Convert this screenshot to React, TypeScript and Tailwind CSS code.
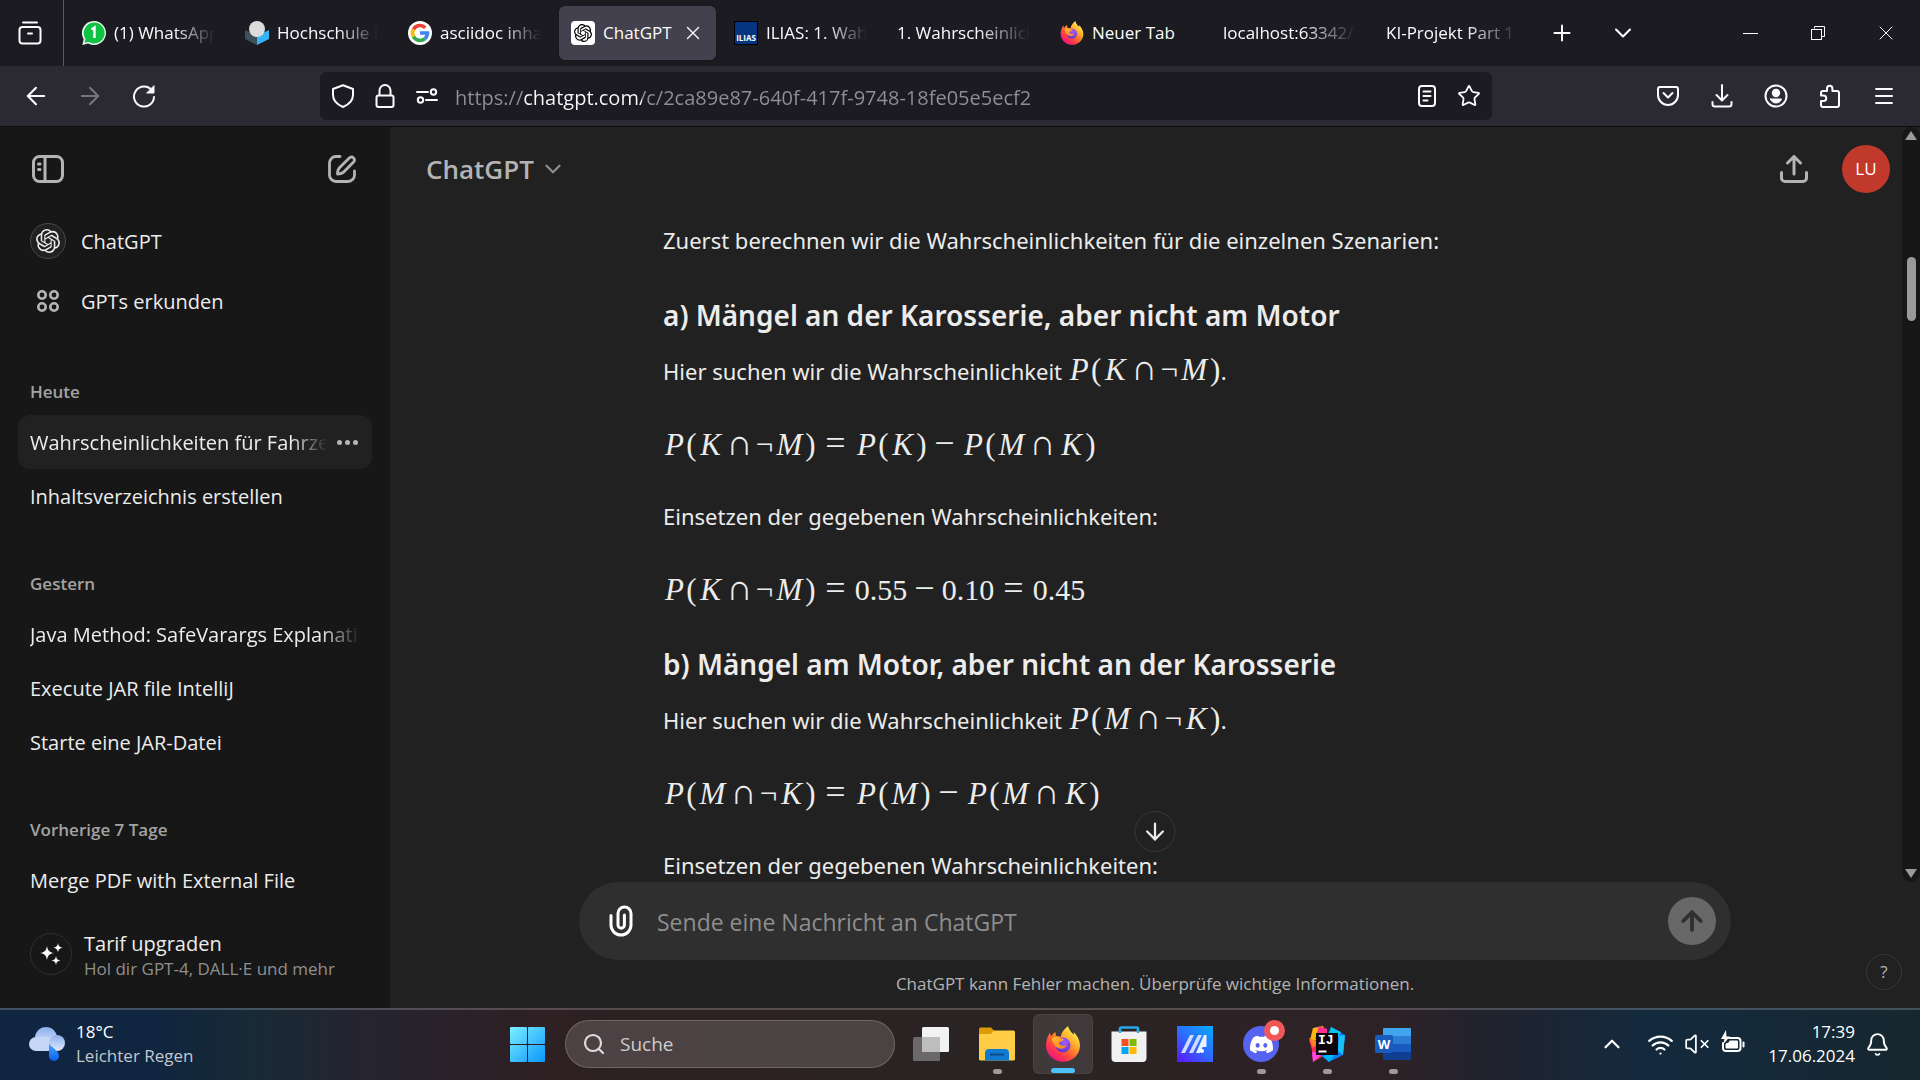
import React from "react";
import { SiOpenai, SiDiscord } from "react-icons/si";
import {
  ArrowLeft,
  ArrowRight,
  ArrowDown,
  ArrowUp,
  ChevronDown,
  ChevronUp,
  Plus,
  X,
  Menu,
  Star,
  Search,
  Wifi,
  VolumeX,
  Bell,
} from "lucide-react";

/* ---------- Browser icons ---------- */

const line = {
  fill: "none",
  stroke: "currentColor",
  strokeWidth: 2,
  strokeLinecap: "round" as const,
  strokeLinejoin: "round" as const,
};

function FirefoxLogo({ className, id }: { className: string; id: string }) {
  return (
    <svg viewBox="0 0 34 36" className={className} aria-hidden="true">
      <defs>
        <linearGradient id={id + "a"} x1="0.85" y1="0.1" x2="0.2" y2="0.95">
          <stop offset="0" stopColor="#fff44f" />
          <stop offset="0.3" stopColor="#ffb02e" />
          <stop offset="0.55" stopColor="#ff6a2b" />
          <stop offset="0.8" stopColor="#ff2f55" />
          <stop offset="1" stopColor="#e3158a" />
        </linearGradient>
        <radialGradient id={id + "b"} cx="0.6" cy="0.3" r="0.8">
          <stop offset="0" stopColor="#a05cff" />
          <stop offset="0.6" stopColor="#7542e5" />
          <stop offset="1" stopColor="#5a2db8" />
        </radialGradient>
        <linearGradient id={id + "c"} x1="0" y1="0" x2="1" y2="1">
          <stop offset="0" stopColor="#ffbd2e" />
          <stop offset="1" stopColor="#ff7a1f" />
        </linearGradient>
      </defs>
      <path
        d="M22 0c1 4 3 6 5.500 8.500.5-.8.4-1.800.2-2.500 3.600 3.600 6.300 8.500 6.300 13.500 0 9.300-7.600 16.300-17 16.300S0 28.500 0 19.500c0-4.500 1.300-8.500 4-13 .1 1.500.5 2.800 1.300 3.700C6.300 8.600 8 6.600 9.500 6c-.1 1.300.3 3 1 4 1.500.2 3 .2 4.500.8C14.800 7 18.500 3 22 0Z"
        fill={"url(#" + id + "a)"}
      />
      <circle cx="17" cy="19" r="7.500" fill={"url(#" + id + "b)"} />
      <path
        d="M5.500 12.500c2.500-2 5-2 7.500-.7 1.800.7 3.500.6 5 1.700-1 1.800-3.500 2-5 3-.4 1.200.8 2.300 2.300 2.800 2.200.7 3.700-.6 5.200.2-1 2.200-3.500 3.700-6.300 3.200-4.200-.7-6.700-4.200-8.700-10.200Z"
        fill={"url(#" + id + "c)"}
      />
    </svg>
  );
}

const WhatsAppIcon = () => (
  <svg viewBox="0 0 24 24" className="size-6 shrink-0" aria-hidden="true">
    <path d="M12 0a12 12 0 1 1-6 22.400L.3 24l1.400-5.800A12 12 0 0 1 12 0Z" fill="#e9f7ee" />
    <path d="M12 1.500a10.500 10.500 0 1 1-5.600 19.300L2.500 22l1-4.200A10.500 10.500 0 0 1 12 1.500Z" fill="#10c243" />
    <path d="M9.500 8.500 12.500 6.500V17" stroke="#fff" strokeWidth="2.400" fill="none" />
  </svg>
);

const HochschuleIcon = () => (
  <svg viewBox="0 0 24 24" className="size-6 shrink-0" aria-hidden="true">
    <path d="M0 9l12 6v9L0 18Z" fill="#3d5059" />
    <path d="M24 9l-12 6v9l12-6Z" fill="#35b4fb" />
    <ellipse cx="12" cy="8" rx="8" ry="8" fill="#dcdcdc" />
  </svg>
);

const GoogleIcon = () => (
  <svg viewBox="0 0 24 24" className="size-6 shrink-0" aria-hidden="true">
    <circle cx="12" cy="12" r="12" fill="#fff" />
    <g fill="none" strokeWidth="3.600">
      <path d="M5.500 8.300A7.500 7.500 0 0 1 17.300 6.700" stroke="#ea4335" />
      <path d="M5.500 15.700a7.500 7.500 0 0 1 0-7.400" stroke="#fbbc05" />
      <path d="M17 17.600A7.500 7.500 0 0 1 5.500 15.700" stroke="#34a853" />
      <path d="M12 12h7.500a7.500 7.500 0 0 1-2.500 5.600" stroke="#4285f4" />
    </g>
  </svg>
);

const ChatGptTabIcon = () => (
  <span className="flex size-6 shrink-0 items-center justify-center rounded bg-white">
    <SiOpenai className="size-[18px] text-black" />
  </span>
);

const IliasIcon = () => (
  <span className="flex size-6 shrink-0 items-end justify-center border border-black bg-[#06357f] pb-px text-[8px] leading-[10px] font-bold text-white">
    ILIAS
  </span>
);

const SidebarToggleIcon = () => (
  <svg viewBox="0 0 32 28" className="h-7 w-8" {...line} strokeWidth={3}>
    <rect x="1.500" y="1.500" width="29" height="25" rx="6" />
    <path d="M13 2v24M6.500 9h1.500M6.500 14.500h1.500" />
  </svg>
);

const NewChatIcon = () => (
  <svg viewBox="0 0 28 28" className="size-7" {...line} strokeWidth={2.8}>
    <path d="M12 1.500H8A6.500 6.500 0 0 0 1.500 8v12A6.500 6.500 0 0 0 8 26.500h12a6.500 6.500 0 0 0 6.500-6.500v-4" />
    <path d="M21.800 2.600a2.900 2.900 0 0 1 4 4.100L16 16.800c-1.400 1.400-3.500 2.200-6.500 2.200 0-3 .8-5.100 2.200-6.500Z" />
  </svg>
);

const ShieldIcon = () => (
  <svg viewBox="0 0 24 24" className="size-6" {...line}>
    <path d="M12 1.200 22 5v6c0 5.500-4.500 9.700-10 12C6.500 20.700 2 16.500 2 11V5Z" />
  </svg>
);

const LockIcon = () => (
  <svg viewBox="0 0 24 24" className="size-6" {...line}>
    <rect x="3.500" y="11.500" width="17" height="11.500" rx="2" />
    <path d="M6.500 11V6.500a5.500 5.500 0 0 1 11 0V11" />
  </svg>
);

const PermissionsIcon = () => (
  <svg viewBox="0 0 24 24" className="size-6" {...line}>
    <path d="M2 8h11M11 16h11" />
    <circle cx="18.500" cy="8" r="2.700" />
    <circle cx="5.500" cy="16" r="2.700" />
  </svg>
);

const ReloadIcon = () => (
  <svg viewBox="0 0 24 24" className="size-6" {...line}>
    <path d="M20 6.500A10 10 0 1 0 22 13" />
    <path d="M22 2v7h-7Z" fill="currentColor" strokeWidth="1" />
  </svg>
);

const ReaderIcon = () => (
  <svg viewBox="0 0 24 24" className="size-6" {...line}>
    <rect x="4" y="2" width="16" height="20" rx="3" />
    <path d="M8.500 7.500h7M8.500 12h7M8.500 16.500h4" />
  </svg>
);

const PocketIcon = () => (
  <svg viewBox="0 0 24 24" className="size-6" {...line}>
    <path d="M4 3h16a2 2 0 0 1 2 2v6a10 10 0 0 1-20 0V5a2 2 0 0 1 2-2Z" />
    <path d="m7.500 9 4.500 4.500L16.500 9" />
  </svg>
);

const DownloadIcon = () => (
  <svg viewBox="0 0 24 24" className="size-6" {...line}>
    <path d="M12 1v15M6.500 11l5.500 5.500 5.500-5.500M2.500 18v2a2.500 2.500 0 0 0 2.500 2.500h14a2.500 2.500 0 0 0 2.500-2.500v-2" />
  </svg>
);

const AccountIcon = () => (
  <svg viewBox="0 0 24 24" className="size-6" {...line}>
    <circle cx="12" cy="12" r="10.500" />
    <circle cx="12" cy="9" r="3.200" fill="currentColor" />
    <path d="M6.500 15h11c-.5 2.500-3 4-5.500 4s-5-1.500-5.500-4Z" fill="currentColor" strokeWidth="1" />
  </svg>
);

const ExtensionIcon = () => (
  <svg viewBox="0 0 24 24" className="size-6" {...line}>
    <path d="M9 7V4.500a2.700 2.700 0 0 1 5.400 0V7H19a2 2 0 0 1 2 2v12a2 2 0 0 1-2 2H5a2 2 0 0 1-2-2v-4h2.500a2.500 2.500 0 0 0 0-5.500H3V9a2 2 0 0 1 2-2Z" />
  </svg>
);

const ShareIcon = () => (
  <svg viewBox="0 0 28 28" className="size-7" {...line} strokeWidth={3}>
    <path d="M14 19V2M7.500 8 14 1.500 20.500 8M1.500 17.500V23a3.500 3.500 0 0 0 3.500 3.500h18a3.500 3.500 0 0 0 3.500-3.500v-5.500" />
  </svg>
);

const SparkleIcon = () => (
  <svg viewBox="0 0 24 24" className="size-6" fill="currentColor">
    <path d="M8 4c.8 4.500 2.200 6.200 7 7-4.800.8-6.200 2.500-7 7-.8-4.500-2.200-6.200-7-7 4.800-.8 6.200-2.500 7-7ZM19 1c.5 3 1.500 4.300 4.800 4.800C20.500 6.300 19.500 7.500 19 10.500c-.5-3-1.500-4.200-4.800-4.700C17.500 5.300 18.500 4 19 1ZM17 14c.5 3 1.500 4 4.500 4.500C18.500 19 17.500 20 17 23c-.5-3-1.500-4-4.500-4.500C15.500 18 16.500 17 17 14Z" />
  </svg>
);

/* ---------- Taskbar icons ---------- */

const WeatherIcon = () => (
  <svg viewBox="0 0 36 34" className="h-[34px] w-9 shrink-0" aria-hidden="true">
    <defs>
      <linearGradient id="cloud" x1="0" y1="0" x2="0" y2="1">
        <stop offset="0" stopColor="#8fb1ee" />
        <stop offset="1" stopColor="#dfe9fb" />
      </linearGradient>
      <linearGradient id="drop" x1="0" y1="0" x2="0" y2="1">
        <stop offset="0" stopColor="#4aa3ff" />
        <stop offset="1" stopColor="#0b62f0" />
      </linearGradient>
    </defs>
    <circle cx="17" cy="11" r="11" fill="url(#cloud)" />
    <rect x="0" y="10" width="26" height="14" rx="7" fill="#c5d6f6" />
    <circle cx="28" cy="16" r="8" fill="url(#cloud)" />
    <path d="M20 16c1 4 10 7 10 13a5 5 0 0 1-10 0Z" fill="url(#drop)" />
  </svg>
);

const WindowsIcon = () => (
  <svg viewBox="0 0 35 35" className="size-[35px]" aria-hidden="true">
    <defs>
      <linearGradient id="win" gradientUnits="userSpaceOnUse" x1="0" y1="0" x2="35" y2="35">
        <stop offset="0" stopColor="#7cf0ff" />
        <stop offset="1" stopColor="#0a95fb" />
      </linearGradient>
    </defs>
    <g fill="url(#win)">
      <rect width="17" height="17" rx="1" />
      <rect x="18" width="17" height="17" rx="1" />
      <rect y="18" width="17" height="17" rx="1" />
      <rect x="18" y="18" width="17" height="17" rx="1" />
    </g>
  </svg>
);

const TaskViewIcon = () => (
  <svg viewBox="0 0 36 36" className="size-9" aria-hidden="true">
    <rect y="11" width="27" height="24" rx="1.500" fill="#6a6868" />
    <rect x="9" y="1" width="27" height="25" rx="1.500" fill="#f2f2f2" />
    <rect x="9" y="11" width="18" height="15" fill="#bdbdbd" />
  </svg>
);

const ExplorerIcon = () => (
  <svg viewBox="0 0 36 36" className="size-9" aria-hidden="true">
    <path d="M0 3a1.500 1.500 0 0 1 1.500-1.500H12l4 4-3 5H0Z" fill="#dd9c06" />
    <path d="M0 8h12l3-3.500h19.500A1.500 1.500 0 0 1 36 6v27a1.500 1.500 0 0 1-1.500 1.500h-33A1.500 1.500 0 0 1 0 33Z" fill="#ffcd45" />
    <path d="M6 34.500V27a4 4 0 0 1 4-4h16a4 4 0 0 1 4 4v7.500Z" fill="#0f7bd0" />
    <path d="M11 28.500h14" stroke="#084b87" strokeWidth="2" />
  </svg>
);

const StoreIcon = () => (
  <svg viewBox="0 0 36 36" className="size-9" aria-hidden="true">
    <path d="M9 7V2.500a1 1 0 0 1 1-1h16a1 1 0 0 1 1 1V7" fill="none" stroke="#27abe8" strokeWidth="2.400" />
    <path d="M.5 5.500h35V32a4 4 0 0 1-4 4h-27a4 4 0 0 1-4-4Z" fill="#f1f1f1" />
    <path d="M9 2.500V7M27 2.500V7" stroke="#27abe8" strokeWidth="2.400" />
    <rect x="10.500" y="13" width="7" height="7" fill="#f25022" />
    <rect x="18.500" y="13" width="7" height="7" fill="#7fba00" />
    <rect x="10.500" y="21" width="7" height="7" fill="#00a4ef" />
    <rect x="18.500" y="21" width="7" height="7" fill="#ffb900" />
  </svg>
);

const AsusIcon = () => (
  <svg viewBox="0 0 36 36" className="size-9" aria-hidden="true">
    <defs>
      <linearGradient id="asus" x1="0.1" y1="1" x2="0.9" y2="0">
        <stop offset="0" stopColor="#5a1cf5" />
        <stop offset="0.5" stopColor="#2d6cff" />
        <stop offset="1" stopColor="#0aa6ff" />
      </linearGradient>
    </defs>
    <rect width="36" height="36" fill="url(#asus)" />
    <path d="M4 27 13 9h4L8 27ZM12 27 21 9h4l-9 18Z" fill="#cfdcff" />
    <path d="M19 27 27 9h2.500v12h-4L23 27Z" fill="#eaf1ff" />
    <circle cx="25" cy="25" r="2" fill="#fff" />
  </svg>
);

const DiscordIcon = () => (
  <span className="relative block size-9">
    <span className="flex size-9 items-center justify-center rounded-full bg-[#5662f0]">
      <SiDiscord className="size-[23px] text-white" />
    </span>
    <span className="absolute -top-1.5 -right-1.5 size-[21px] rounded-full border-[6px] border-[#f05858] bg-white" />
  </span>
);

const IntelliJIcon = () => (
  <span className="relative block size-9">
    <svg viewBox="0 0 36 36" className="size-9" aria-hidden="true">
      <path d="M4 2 14 0l4 10-10 6-7-2Z" fill="#fdb60d" />
      <path d="M10 0 18 3v10H6Z" fill="#ff318c" />
      <path d="M0 14h12l6 14-14 8-1-12Z" fill="#fe2857" />
      <path d="M0 12 10 16 4 22Z" fill="#fc801d" />
      <path d="M22 1 36 9l-2 20-14 7-10-8Z" fill="#087cfa" />
      <path d="M22 1 32 6l-4 8-8-6Z" fill="#07c3f2" />
      <path d="M14 30 28 26 20 36Z" fill="#00b8f1" />
      <path d="M30 10 36 9 34 29l-5-4Z" fill="#17c0f5" />
      <path d="M3 26 14 27 4 36Z" fill="#ff45ed" />
      <rect x="7" y="7" width="22" height="22" fill="#0c0409" />
      <rect x="9.500" y="24.500" width="8" height="2" fill="#fff" />
    </svg>
    <span className="absolute top-[8px] left-[9px] font-mono text-[13px] leading-[13px] font-bold text-white">IJ</span>
  </span>
);

const WordIcon = () => (
  <span className="relative block size-9">
    <svg viewBox="0 0 36 36" className="size-9" aria-hidden="true">
      <path d="M9 2h26a1 1 0 0 1 1 1v7H8V3a1 1 0 0 1 1-1Z" fill="#41a5ee" />
      <path d="M8 10h28v8H8Z" fill="#2b7cd3" />
      <path d="M8 18h28v8H8Z" fill="#185abd" />
      <path d="M8 26h28v7a1 1 0 0 1-1 1H9a1 1 0 0 1-1-1Z" fill="#103f91" />
      <rect y="9" width="18" height="18" rx="1.500" fill="#185abd" />
    </svg>
    <span className="absolute top-[9px] left-0 w-[18px] text-center text-[13px] leading-[18px] font-bold text-white">W</span>
  </span>
);

const BatteryIcon = () => (
  <svg viewBox="0 0 26 28" className="h-7 w-[26px]" {...line}>
    <path d="M9 8h8.500a3 3 0 0 1 3 3v7a3 3 0 0 1-3 3H6a3 3 0 0 1-3-3v-5" />
    <path d="M10 11h7.500v7H6v-4l3.500-1.500Z" fill="currentColor" strokeWidth="1" />
    <path d="M23.500 12.500v4" />
    <path d="M6 0 1 9h3.500L3.500 14 10 6.500H6.500Z" fill="currentColor" stroke="none" />
  </svg>
);

/* ---------- Browser chrome ---------- */

type Tab = { title: string; icon?: React.ReactNode; active?: boolean; fade?: boolean };

const tabs: Tab[] = [
  { title: "(1) WhatsApp", icon: <WhatsAppIcon />, fade: true },
  { title: "Hochschule H", icon: <HochschuleIcon />, fade: true },
  { title: "asciidoc inhalt", icon: <GoogleIcon />, fade: true },
  { title: "ChatGPT", icon: <ChatGptTabIcon />, active: true },
  { title: "ILIAS: 1. Wahr", icon: <IliasIcon />, fade: true },
  { title: "1. Wahrscheinlich", fade: true },
  { title: "Neuer Tab", icon: <FirefoxLogo id="ft" className="h-6 w-6 shrink-0" /> },
  { title: "localhost:63342/", fade: true },
  { title: "KI-Projekt Part 1", fade: true },
];

function TabBar() {
  return (
    <header className="flex h-[66px] shrink-0 items-center bg-[#1c1b22] text-[17px] text-[#fbfbfe]">
      <button aria-label="Firefox View" className="flex h-full w-16 shrink-0 items-center border-r border-[#5b5a64] pl-[18px]">
        <svg viewBox="0 0 24 24" className="size-6" {...line}>
          <path d="M5 1.500h14" />
          <rect x="1.500" y="6" width="21" height="16.500" rx="3" />
          <path d="M10 12.500h4" />
        </svg>
      </button>
      <div role="tablist" className="ml-1.5 flex min-w-0 gap-1.5">
        {tabs.map((t) => (
          <div
            key={t.title}
            className={
              t.active
                ? "flex h-[54px] w-[157px] min-w-0 items-center rounded-md bg-[#42414d] px-3 shadow"
                : "flex h-[54px] w-[157px] min-w-0 items-center px-3"
            }
          >
            <button role="tab" aria-selected={!!t.active} className="flex min-w-0 flex-1 items-center gap-2 text-left">
              {t.icon}
              <span
                className={
                  t.fade
                    ? "min-w-0 flex-1 overflow-hidden whitespace-nowrap [mask-image:linear-gradient(to_right,black_60%,transparent)]"
                    : "min-w-0 flex-1 whitespace-nowrap"
                }
              >
                {t.title}
              </span>
            </button>
            {t.active && (
              <button aria-label="Tab schließen" className="shrink-0">
                <X className="size-[22px]" strokeWidth={1.5} />
              </button>
            )}
          </div>
        ))}
      </div>
      <button aria-label="Neuer Tab" className="ml-[18px] shrink-0">
        <Plus className="size-[26px]" strokeWidth={1.8} />
      </button>
      <button aria-label="Alle Tabs auflisten" className="ml-[34px] shrink-0">
        <ChevronDown className="size-[28px]" strokeWidth={1.8} />
      </button>
      <div className="ml-auto flex shrink-0 items-center gap-[44px] pr-[22px]">
        <button aria-label="Minimieren" className="flex size-6 items-center justify-center">
          <span className="h-px w-[15px] bg-current" />
        </button>
        <button aria-label="Verkleinern" className="flex size-6 items-center justify-center">
          <svg viewBox="0 0 16 16" className="size-4" fill="none" stroke="currentColor">
            <path d="M4.500 3.500v-2h10v10h-3" />
            <rect x="1.500" y="4.500" width="10" height="10" />
          </svg>
        </button>
        <button aria-label="Schließen" className="flex size-6 items-center justify-center">
          <X className="size-7" strokeWidth={1} />
        </button>
      </div>
    </header>
  );
}

function NavBar() {
  return (
    <nav className="flex h-[61px] shrink-0 items-center border-b border-[#0c0c0d] bg-[#2b2a33] text-[#fbfbfe]">
      <div className="flex w-80 shrink-0 items-center gap-[30px] pl-6">
        <button aria-label="Zurück">
          <ArrowLeft className="size-7 -mx-0.5" strokeWidth={1.8} />
        </button>
        <button aria-label="Vor" className="text-[#76757d]">
          <ArrowRight className="size-7 -mx-0.5" strokeWidth={1.8} />
        </button>
        <button aria-label="Neu laden">
          <ReloadIcon />
        </button>
      </div>
      <div className="flex h-12 max-w-[1172px] flex-1 items-center rounded-md bg-[#1c1b22] px-[11px]">
        <div className="flex shrink-0 gap-[18px]">
          <button aria-label="Schutzmaßnahmen"><ShieldIcon /></button>
          <button aria-label="Verbindung sicher"><LockIcon /></button>
          <button aria-label="Berechtigungen"><PermissionsIcon /></button>
        </div>
        <input
          aria-label="Adresse"
          readOnly
          value="https://chatgpt.com/c/2ca89e87-640f-417f-9748-18fe05e5ecf2"
          className="ml-4 h-full min-w-0 flex-1 bg-[linear-gradient(90deg,#8f8f96_69px,#fbfbfe_69px,#fbfbfe_187px,#8f8f96_187px)] bg-clip-text pt-0.5 text-[20px] text-transparent outline-none"
        />
        <div className="flex shrink-0 gap-[18px]">
          <button aria-label="Leseansicht"><ReaderIcon /></button>
          <button aria-label="Lesezeichen"><Star className="size-6" strokeWidth={1.8} /></button>
        </div>
      </div>
      <div className="ml-auto flex shrink-0 gap-[30px] pr-6">
        <button aria-label="Pocket"><PocketIcon /></button>
        <button aria-label="Downloads"><DownloadIcon /></button>
        <button aria-label="Konto"><AccountIcon /></button>
        <button aria-label="Erweiterungen"><ExtensionIcon /></button>
        <button aria-label="Menü"><Menu className="size-6" strokeWidth={1.8} /></button>
      </div>
    </nav>
  );
}

/* ---------- Sidebar ---------- */

const history = [
  { label: "Heute", items: ["Wahrscheinlichkeiten für Fahrzeug", "Inhaltsverzeichnis erstellen"] },
  { label: "Gestern", items: ["Java Method: SafeVarargs Explanation", "Execute JAR file IntelliJ", "Starte eine JAR-Datei"] },
  { label: "Vorherige 7 Tage", items: ["Merge PDF with External File"] },
];

function Sidebar() {
  return (
    <aside className="flex w-[390px] shrink-0 flex-col bg-[#171717] px-[18px] text-[20px] text-[#ececec]">
      <div className="flex h-[84px] shrink-0 items-center justify-between pr-4 pl-3.5 text-[#b4b4b4]">
        <button aria-label="Seitenleiste schließen"><SidebarToggleIcon /></button>
        <button aria-label="Neuer Chat"><NewChatIcon /></button>
      </div>
      <a href="#chatgpt" className="flex h-[60px] shrink-0 items-center gap-[15px] pl-3">
        <span className="flex size-9 items-center justify-center rounded-full border border-[#4a4a4a] bg-[#212121]">
          <SiOpenai className="size-6" />
        </span>
        <span className="pt-0.5">ChatGPT</span>
      </a>
      <a href="#gpts" className="flex h-[60px] shrink-0 items-center gap-[15px] pl-3">
        <span className="flex size-9 items-center justify-center text-[#b4b4b4]">
          <svg viewBox="0 0 24 24" className="size-6" fill="none" stroke="currentColor" strokeWidth="2.600">
            <circle cx="6" cy="6" r="3.700" />
            <circle cx="18" cy="6" r="3.700" />
            <circle cx="6" cy="18" r="3.700" />
            <circle cx="18" cy="18" r="3.700" />
          </svg>
        </span>
        <span className="pt-0.5">GPTs erkunden</span>
      </a>
      <div className="mt-[37px] flex min-h-0 flex-1 flex-col gap-[37px] overflow-hidden">
        {history.map((g) => (
          <section key={g.label} className="shrink-0">
            <h3 className="flex h-[47px] items-center px-3 text-[17px] font-semibold text-[#a3a3a3]">{g.label}</h3>
            <ul>
              {g.items.map((item, i) => {
                const active = g.label === "Heute" && i === 0;
                return (
                  <li
                    key={item}
                    className={
                      active
                        ? "flex h-[54px] items-center rounded-xl bg-[#212121] px-3"
                        : "flex h-[54px] items-center px-3"
                    }
                  >
                    <a
                      href="#chat"
                      className={
                        item.length > 30
                          ? "min-w-0 flex-1 overflow-hidden pt-0.5 whitespace-nowrap [mask-image:linear-gradient(to_right,black_88%,transparent)]"
                          : "min-w-0 flex-1 pt-0.5 whitespace-nowrap"
                      }
                    >
                      {item}
                    </a>
                    {active && (
                      <button aria-label="Optionen" className="mr-0.5 ml-2.5 flex shrink-0 items-center gap-[3px] text-[#b4b4b4]">
                        <span className="size-[5px] rounded-full bg-current" />
                        <span className="size-[5px] rounded-full bg-current" />
                        <span className="size-[5px] rounded-full bg-current" />
                      </button>
                    )}
                  </li>
                );
              })}
            </ul>
          </section>
        ))}
      </div>
      <button className="mb-[18px] flex h-[72px] shrink-0 items-center gap-3 pl-3 text-left">
        <span className="flex size-[42px] items-center justify-center rounded-full border border-[#2f2f2f] text-white">
          <SparkleIcon />
        </span>
        <span className="flex flex-col pt-0.5">
          <span className="leading-[27px]">Tarif upgraden</span>
          <span className="text-[17px] leading-6 text-[#8f8f8f]">Hol dir GPT-4, DALL·E und mehr</span>
        </span>
      </button>
    </aside>
  );
}

/* ---------- Conversation ---------- */

const glyphs: Record<string, string> = {
  P: "w-[23px] italic",
  K: "w-[27px] italic",
  M: "w-[31px] italic",
  "(": "w-[11px]",
  ")": "w-[11px]",
  "¬": "w-[19px]",
  "∩": "mx-1.5 w-[19px] text-[36px]",
  "−": "mx-1.5 w-[23px] text-[36px]",
  "=": "mx-2 w-[23px] text-[36px]",
};

function Formula({ tex }: { tex: string }) {
  const tokens = tex.match(/[0-9.]+|\S/g) ?? [];
  return (
    <span className="inline-flex items-baseline font-['Liberation_Serif',serif] text-[31px] leading-8 whitespace-nowrap">
      {tokens.map((t, i) => (
        <span key={i} className={"flex justify-center " + (glyphs[t] ?? "w-[52px] text-[30px]")}>
          {t}
        </span>
      ))}
    </span>
  );
}

const P = ({ children }: { children: React.ReactNode }) => <p className="h-[42px] leading-[42px]">{children}</p>;
const H = ({ children }: { children: React.ReactNode }) => (
  <h3 className="mt-[34px] mb-[15px] text-[28px] leading-10 font-semibold">{children}</h3>
);
const Block = ({ tex }: { tex: string }) => (
  <div className="my-[30px] flex h-[43px] items-center">
    <Formula tex={tex} />
  </div>
);

function Messages() {
  return (
    <div className="min-h-0 flex-1 overflow-hidden pt-2">
      <div className="mx-auto max-w-[1152px] pl-[93px] font-['Noto_Sans','Open_Sans',sans-serif] text-[22px] text-[#ececec]">
        <P>Zuerst berechnen wir die Wahrscheinlichkeiten für die einzelnen Szenarien:</P>
        <H>a) Mängel an der Karosserie, aber nicht am Motor</H>
        <P>Hier suchen wir die Wahrscheinlichkeit <Formula tex="P ( K ∩ ¬ M )" />.</P>
        <Block tex="P ( K ∩ ¬ M ) = P ( K ) − P ( M ∩ K )" />
        <P>Einsetzen der gegebenen Wahrscheinlichkeiten:</P>
        <Block tex="P ( K ∩ ¬ M ) = 0.55 − 0.10 = 0.45" />
        <H>b) Mängel am Motor, aber nicht an der Karosserie</H>
        <P>Hier suchen wir die Wahrscheinlichkeit <Formula tex="P ( M ∩ ¬ K )" />.</P>
        <Block tex="P ( M ∩ ¬ K ) = P ( M ) − P ( M ∩ K )" />
        <P>Einsetzen der gegebenen Wahrscheinlichkeiten:</P>
      </div>
    </div>
  );
}

function ScrollBar() {
  return (
    <div className="flex w-[18px] shrink-0 flex-col items-center rounded-full bg-[#171717] py-1" aria-hidden="true">
      <svg viewBox="0 0 12 9" className="h-[9px] w-3 fill-[#9a9a9a]"><path d="M6 0 12 9H0Z" /></svg>
      <span className="mt-[117px] h-16 w-[9px] rounded-full bg-[#9a9a9a]" />
      <svg viewBox="0 0 12 9" className="mt-auto h-[9px] w-3 fill-[#9a9a9a]"><path d="M6 9 0 0h12Z" /></svg>
    </div>
  );
}

function Chat() {
  return (
    <main className="relative flex min-w-0 flex-1 flex-col bg-[#212121]">
      <div className="relative flex min-h-0 flex-1">
        <div className="flex min-w-0 flex-1 flex-col">
          <div className="flex h-[84px] shrink-0 items-center pr-3 pl-9">
            <button className="flex items-center gap-1.5 text-[26px] font-semibold text-[#b4b4b4]">
              ChatGPT
              <ChevronDown className="size-[26px] text-[#8f8f8f]" strokeWidth={2} />
            </button>
            <button aria-label="Teilen" className="ml-auto text-[#b4b4b4]"><ShareIcon /></button>
            <button aria-label="Profil" className="ml-[34px] size-12 rounded-full bg-[#c0392b] text-[17px] text-white">LU</button>
          </div>
          <Messages />
        </div>
        <ScrollBar />
        <button
          aria-label="Nach unten"
          className="absolute bottom-[30px] left-1/2 flex size-[41px] -translate-x-1/2 items-center justify-center rounded-full border border-[#383838] bg-[#212121] text-[#ececec]"
        >
          <ArrowDown className="size-[27px]" strokeWidth={2} />
        </button>
      </div>
      <form className="mx-auto flex h-[78px] w-full max-w-[1152px] shrink-0 items-center rounded-full bg-[#2f2f2f] pr-[15px] pl-[27px]">
        <button type="button" aria-label="Datei anhängen" className="text-white">
          <svg viewBox="0 0 30 32" className="h-8 w-[30px]" fill="none" stroke="currentColor" strokeWidth="3" strokeLinecap="round">
            <path d="M5 10.500V20a10 10 0 0 0 20 0V8.500a6.500 6.500 0 0 0-13 0V20a3.200 3.200 0 0 0 6.400 0V10" />
          </svg>
        </button>
        <input
          aria-label="Nachricht"
          placeholder="Sende eine Nachricht an ChatGPT"
          className="ml-[21px] h-full min-w-0 flex-1 bg-transparent pt-0.5 text-[23px] text-[#ececec] outline-none placeholder:text-[#8e8e8e]"
        />
        <button type="button" aria-label="Senden" className="flex size-12 items-center justify-center rounded-full bg-[#676767] text-[#2f2f2f]">
          <ArrowUp className="size-[30px]" strokeWidth={3} />
        </button>
      </form>
      <p className="flex h-12 shrink-0 items-center justify-center text-[17px] text-[#b4b4b4]">
        ChatGPT kann Fehler machen. Überprüfe wichtige Informationen.
      </p>
      <button className="absolute right-[18px] bottom-[18px] size-9 rounded-full border border-[#383838] text-[17px] text-[#b4b4b4]">
        ?
      </button>
    </main>
  );
}

/* ---------- Taskbar ---------- */

const apps = [
  { name: "Taskansicht", icon: <TaskViewIcon />, state: "" },
  { name: "Explorer", icon: <ExplorerIcon />, state: "open" },
  { name: "Firefox", icon: <FirefoxLogo id="fb" className="h-9 w-[34px]" />, state: "active" },
  { name: "Microsoft Store", icon: <StoreIcon />, state: "" },
  { name: "MyASUS", icon: <AsusIcon />, state: "" },
  { name: "Discord", icon: <DiscordIcon />, state: "open" },
  { name: "IntelliJ IDEA", icon: <IntelliJIcon />, state: "open" },
  { name: "Word", icon: <WordIcon />, state: "open" },
];

function Taskbar() {
  return (
    <footer className="flex h-[72px] shrink-0 items-center border-t-2 border-white/20 bg-[linear-gradient(90deg,#10253f_0%,#10253f_8%,#172a36_13%,#252430_19%,#2e2023_28%,#2a2323_50%,#2e2226_72%,#20232f_78%,#132a3e_86%,#16272f_100%)] bg-origin-border pb-0.5 text-[17px] text-white">
      <button className="flex min-w-0 flex-1 items-center gap-[11px] pl-[29px] text-left">
        <WeatherIcon />
        <span className="flex flex-col leading-6">
          <span>18°C</span>
          <span className="text-[#c3c8ce]">Leichter Regen</span>
        </span>
      </button>
      <div className="flex shrink-0 items-center pl-3.5">
        <button aria-label="Start"><WindowsIcon /></button>
        <label className="ml-5 flex h-12 w-[330px] items-center rounded-full border border-white/20 bg-white/15 px-4">
          <Search className="size-6 text-[#dcdcdc]" strokeWidth={2.2} />
          <input
            aria-label="Suche"
            placeholder="Suche"
            className="ml-[14px] min-w-0 flex-1 bg-transparent text-[19px] outline-none placeholder:text-[#d0cccc]"
          />
        </label>
        <div className="ml-[6px] flex gap-1.5">
          {apps.map((a) => (
            <button
              key={a.name}
              aria-label={a.name}
              className={
                a.state === "active"
                  ? "relative flex size-[60px] items-center justify-center rounded-md border border-white/5 bg-white/10"
                  : "relative flex size-[60px] items-center justify-center"
              }
            >
              {a.icon}
              {a.state === "active" && <span className="absolute bottom-0 left-[17px] h-[5px] w-6 rounded-full bg-[#4cc2ff]" />}
              {a.state === "open" && <span className="absolute bottom-0 left-[26px] h-[5px] w-[9px] rounded-full bg-[#9d9a9a]" />}
            </button>
          ))}
        </div>
      </div>
      <div className="flex min-w-0 flex-1 items-center justify-end pr-[30px]">
        <button aria-label="Ausgeblendete Symbole"><ChevronUp className="size-[26px]" strokeWidth={2} /></button>
        <button aria-label="Netzwerk, Lautstärke und Akku" className="ml-[22px] flex items-center gap-2.5">
          <Wifi className="size-[27px]" strokeWidth={2} />
          <VolumeX className="size-[26px]" strokeWidth={1.6} />
          <BatteryIcon />
        </button>
        <button className="ml-[22px] flex flex-col text-right leading-6">
          <span>17:39</span>
          <span>17.06.2024</span>
        </button>
        <button aria-label="Benachrichtigungen" className="ml-2.5"><Bell className="size-[25px]" strokeWidth={1.8} /></button>
      </div>
    </footer>
  );
}

export default function App() {
  return (
    <div className="flex h-screen flex-col overflow-hidden font-['Open_Sans','Noto_Sans',sans-serif]">
      <TabBar />
      <NavBar />
      <div className="flex min-h-0 flex-1">
        <Sidebar />
        <Chat />
      </div>
      <Taskbar />
    </div>
  );
}
